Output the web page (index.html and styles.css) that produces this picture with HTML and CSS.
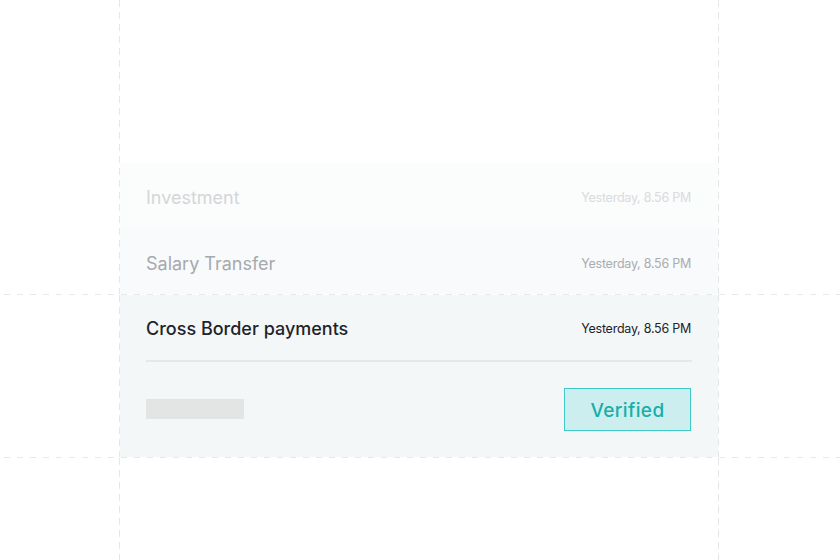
FILE: index.html
```html
<!DOCTYPE html>
<html lang="en">
<head>
  <meta charset="UTF-8">
  <title>Transactions</title>
  <link rel="stylesheet" href="styles.css">
</head>
<body>
<div class="band band-top">
  <div class="column column-top">
    <div class="row row-faded">
      <span class="row-title">Investment</span>
      <span class="row-date">Yesterday, 8.56 PM</span>
    </div>
    <div class="row row-muted">
      <span class="row-title">Salary Transfer</span>
      <span class="row-date">Yesterday, 8.56 PM</span>
    </div>
  </div>
</div>

<div class="band band-active">
  <div class="column">
    <div class="active">
      <div class="row row-current">
        <span class="row-title">Cross Border payments</span>
        <span class="row-date">Yesterday, 8.56 PM</span>
      </div>
      <div class="divider"></div>
      <div class="active-footer">
        <div class="placeholder"></div>
        <div class="badge">Verified</div>
      </div>
    </div>
  </div>
</div>

<div class="band band-bottom">
  <div class="column column-bottom"></div>
</div>
</body>
</html>
```

FILE: styles.css
```css
body {
  margin: 0;
  padding: 0;
  background: #ffffff;
  font-family: "Inter", "Liberation Sans", sans-serif;
  overflow: hidden;
}
.band {
  width: 100%;
}
.band-active {
  background-image:
    repeating-linear-gradient(to right, #e6e8ea 0 6px, transparent 6px 13px),
    repeating-linear-gradient(to right, #e6e8ea 0 6px, transparent 6px 13px);
  background-size: 100% 1px, 100% 1px;
  background-position: 4px 0, 4px 100%;
  background-repeat: no-repeat;
  padding: 1px 0;
}
.column {
  margin-left: 119px;
  width: 600px;
  padding: 0 1px;
  box-sizing: border-box;
  background-image:
    repeating-linear-gradient(to bottom, #e4e6e8 0 7px, transparent 7px 12px),
    repeating-linear-gradient(to bottom, #e4e6e8 0 7px, transparent 7px 12px);
  background-size: 1px 100%, 1px 100%;
  background-position: left top, right top;
  background-repeat: no-repeat;
}
.column-top {
  padding-top: 163px;
}
.column-bottom {
  height: 120px;
}
.row {
  display: flex;
  align-items: center;
  justify-content: space-between;
  padding: 2px 27px 0 26px;
  box-sizing: border-box;
}
.row-title {
  font-size: 18px;
  letter-spacing: 0;
}
.row-date {
  font-size: 12.5px;
  letter-spacing: -0.25px;
}
.row-faded {
  height: 66px;
  background: #fbfcfc;
}
.row-faded .row-title {
  color: #d3d6d8;
}
.row-faded .row-date {
  color: #d9dbdd;
}
.row-muted {
  height: 65px;
  padding-top: 4px;
  background: #f9fafb;
}
.row-muted .row-title {
  color: #a6a9ad;
}
.row-muted .row-date {
  color: #a9acb0;
}
.active {
  background: #f4f7f8;
}
.row-current {
  height: 65px;
}
.row-current .row-title {
  color: #1f232a;
  font-weight: 500;
}
.row-current .row-date {
  color: #1f232a;
}
.divider {
  height: 2px;
  margin: 0 26px 0 26px;
  background: #e5e8ea;
}
.active-footer {
  height: 95px;
  display: flex;
  align-items: center;
  justify-content: space-between;
  padding: 0 27px 0 26px;
}
.placeholder {
  width: 98px;
  height: 20px;
  margin-top: -1px;
  background: #e3e5e5;
}
.badge {
  width: 127px;
  height: 43px;
  box-sizing: border-box;
  border: 1px solid #3ecbc7;
  background: #cdeeee;
  color: #17aeaa;
  font-size: 19px;
  font-weight: 500;
  letter-spacing: 0.4px;
  display: flex;
  align-items: center;
  justify-content: center;
  padding-top: 1px;
}
```
